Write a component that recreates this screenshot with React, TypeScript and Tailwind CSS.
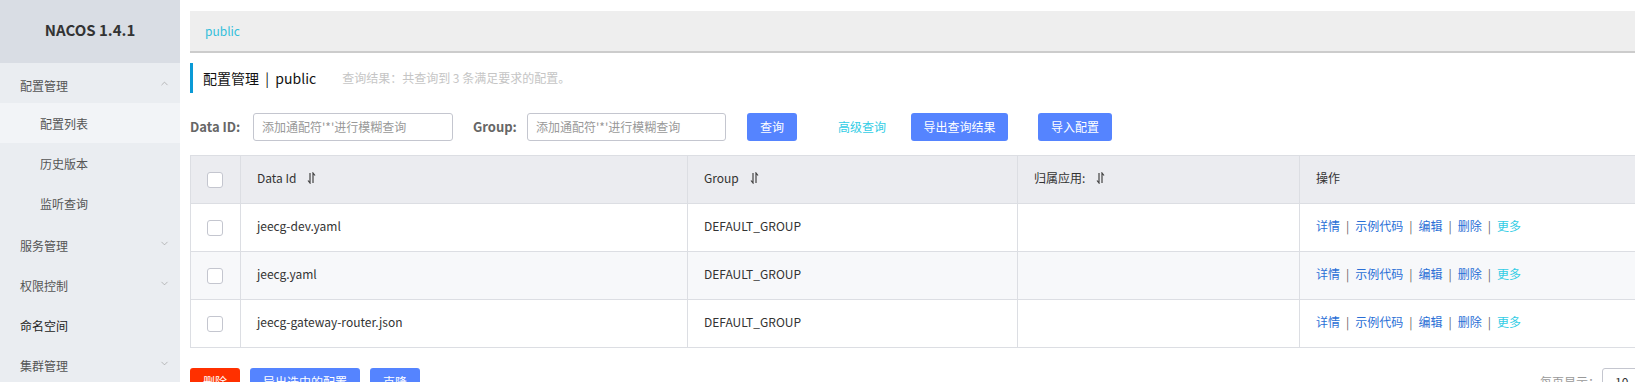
import { ChevronDown, ChevronUp } from 'lucide-react';

const menu = [
  { label: '配置管理', open: true, children: ['配置列表', '历史版本', '监听查询'] },
  { label: '服务管理', open: false },
  { label: '权限控制', open: false },
  { label: '命名空间', leaf: true },
  { label: '集群管理', open: false },
];

const rows = ['jeecg-dev.yaml', 'jeecg.yaml', 'jeecg-gateway-router.json'];

const font = { fontFamily: '"Noto Sans CJK SC", "Noto Sans", sans-serif' };

function SortIcon() {
  return (
    <svg width="10" height="12" viewBox="0 0 10 12" className="ml-2.5 inline-block">
      <path d="M4 1v10L2 8.5" stroke="#444" strokeWidth="1.2" fill="none" />
      <path d="M7 11V1l2 2.5" stroke="#444" strokeWidth="1.2" fill="none" />
    </svg>
  );
}

function Checkbox() {
  return <div className="w-4 h-4 bg-white border border-[#c4c6cf] rounded-[3px]"></div>;
}

function Actions() {
  const sep = <span className="mx-1.5 text-[#666]">|</span>;
  return (
    <div className="text-xs text-[#2a6fd6]">
      <span>详情</span>
      {sep}
      <span>示例代码</span>
      {sep}
      <span>编辑</span>
      {sep}
      <span>删除</span>
      {sep}
      <span className="text-[#33cde5]">更多</span>
    </div>
  );
}

export default function App() {
  return (
    <div className="flex w-[1635px] h-[382px] overflow-hidden bg-white" style={font}>
      <aside className="w-[180px] shrink-0 bg-[#eaedf1] text-xs">
        <div className="h-[63px] bg-[#d9dde4] flex items-center justify-center pb-1 text-[15px] font-bold text-[#333]">
          NACOS 1.4.1
        </div>
        {menu.map((m) => (
          <div key={m.label}>
            <div className={`h-10 flex items-center justify-between pl-5 pr-[10px] ${m.leaf ? 'text-[#222]' : 'text-[#555]'}`}>
              <span className="pt-1.5">{m.label}</span>
              {!m.leaf &&
                (m.open ? (
                  <ChevronUp size={11} strokeWidth={1.4} className="text-[#999]" />
                ) : (
                  <ChevronDown size={11} strokeWidth={1.4} className="text-[#999]" />
                ))}
            </div>
            {m.children?.map((c, i) => (
              <div key={c} className={`h-10 flex items-center pl-10 pt-0.5 text-[#555] ${i === 0 ? 'bg-[#f2f4f7]' : ''}`}>
                {c}
              </div>
            ))}
          </div>
        ))}
      </aside>

      <main className="w-[1520px] shrink-0 pl-[10px] pt-[11px]">
        <div className="h-[42px] bg-[#eeeeee] border-b-2 border-[#cccccc] flex items-center pl-[15px] text-xs text-[#33bfdb]">
          public
        </div>

        <div className="mt-[10px] h-[30px] border-l-[3px] border-[#0a9ad6] flex items-center pl-[10px]">
          <span className="text-sm text-[#111]">配置管理&nbsp;&nbsp;|&nbsp;&nbsp;public</span>
          <span className="ml-[26px] text-xs text-[#c5c5c5]">查询结果：共查询到 3 条满足要求的配置。</span>
        </div>

        <div className="mt-5 flex items-center h-7 text-xs whitespace-nowrap">
          <span className="text-[13px] font-bold text-[#666] w-[63px]">Data ID:</span>
          <div className="w-[200px] h-7 border border-[#c4c6cf] rounded-[3px] flex items-center pl-2 text-[#999]">
            添加通配符'*'进行模糊查询
          </div>
          <span className="ml-5 text-[13px] font-bold text-[#666] w-[54px]">Group:</span>
          <div className="w-[199px] h-7 border border-[#c4c6cf] rounded-[3px] flex items-center pl-2 text-[#999]">
            添加通配符'*'进行模糊查询
          </div>
          <button className="ml-[21px] w-[50px] h-7 rounded-[3px] bg-[#5584ff] text-white">查询</button>
          <span className="ml-[41px] text-[#33cde5]">高级查询</span>
          <button className="ml-[25px] w-[97px] h-7 rounded-[3px] bg-[#5584ff] text-white">导出查询结果</button>
          <button className="ml-[30px] w-[74px] h-7 rounded-[3px] bg-[#5584ff] text-white">导入配置</button>
        </div>

        <div className="mt-[14px] border-x border-b border-[#dcdee3] text-xs text-[#333]">
          <div className="h-12 flex bg-[#ebecf0] border-t border-[#dcdee3]">
            <div className="w-[50px] flex items-center pl-4 border-r border-[#dcdee3]"><Checkbox /></div>
            <div className="w-[447px] flex items-center pl-4 pb-[3px] border-r border-[#dcdee3]">Data Id<SortIcon /></div>
            <div className="w-[330px] flex items-center pl-4 pb-[3px] border-r border-[#dcdee3]">Group<SortIcon /></div>
            <div className="w-[282px] flex items-center pl-4 pb-[3px] border-r border-[#dcdee3]">归属应用:<SortIcon /></div>
            <div className="flex-1 flex items-center pl-4 pb-[3px]">操作</div>
          </div>
          {rows.map((r, i) => (
            <div key={r} className={`h-12 flex border-t border-[#dcdee3] ${i === 1 ? 'bg-[#f7f8fa]' : 'bg-white'}`}>
              <div className="w-[50px] flex items-center pl-4 border-r border-[#dcdee3]"><Checkbox /></div>
              <div className="w-[447px] flex items-center pl-4 pb-[3px] border-r border-[#dcdee3]">{r}</div>
              <div className="w-[330px] flex items-center pl-4 pb-[3px] border-r border-[#dcdee3]">DEFAULT_GROUP</div>
              <div className="w-[282px] border-r border-[#dcdee3]"></div>
              <div className="flex-1 flex items-center pl-4 pb-[3px]"><Actions /></div>
            </div>
          ))}
        </div>

        <div className="mt-5 flex items-center text-xs whitespace-nowrap">
          <button className="w-[50px] h-7 rounded-[3px] bg-[#ff3000] text-white">删除</button>
          <button className="ml-2.5 w-[110px] h-7 rounded-[3px] bg-[#5584ff] text-white">导出选中的配置</button>
          <button className="ml-2.5 w-[50px] h-7 rounded-[3px] bg-[#5584ff] text-white">克隆</button>
          <span className="ml-[1120px] shrink-0 text-[#999]">每页显示：</span>
          <div className="ml-[2px] shrink-0 w-16 h-7 border border-[#c4c6cf] rounded-[3px] flex items-center pl-3 text-[#333]">10</div>
        </div>
      </main>
    </div>
  );
}
